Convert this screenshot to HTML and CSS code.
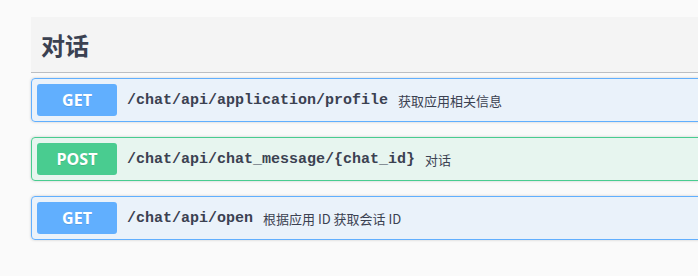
FILE: index.html
```html
<!DOCTYPE html>
<html lang="zh-CN">
<head>
  <meta charset="UTF-8">
  <title>对话</title>
  <link rel="stylesheet" href="styles.css">
</head>
<body>
  <div class="tag-section">
    <h3 class="opblock-tag">对话</h3>

    <div class="opblock opblock-get">
      <div class="opblock-summary">
        <span class="method">GET</span>
        <span class="path">/chat/api/application/profile</span>
        <span class="desc">获取应用相关信息</span>
      </div>
    </div>

    <div class="opblock opblock-post">
      <div class="opblock-summary">
        <span class="method">POST</span>
        <span class="path">/chat/api/chat_message/{chat_id}</span>
        <span class="desc">对话</span>
      </div>
    </div>

    <div class="opblock opblock-get">
      <div class="opblock-summary">
        <span class="method">GET</span>
        <span class="path">/chat/api/open</span>
        <span class="desc">根据应用 ID 获取会话 ID</span>
      </div>
    </div>
  </div>
</body>
</html>
```

FILE: styles.css
```css
body {
  margin: 0;
  padding: 17px 0 0 31px;
  background: #fafafa;
  font-family: 'Noto Sans', 'Noto Sans CJK SC', sans-serif;
  color: #3b4151;
  overflow: hidden;
}

.tag-section {
  width: 690px;
}

.opblock-tag {
  margin: 0 0 5px;
  padding: 10px 20px 10px 10px;
  height: 35px;
  line-height: 35px;
  background: #f4f4f4;
  border-bottom: 1px solid rgba(59, 65, 81, 0.3);
  font-family: 'Noto Sans CJK SC', sans-serif;
  font-size: 24px;
  font-weight: 700;
}

.opblock {
  margin: 0 0 15px;
  border: 1px solid #000;
  border-radius: 4px;
  box-shadow: 0 0 3px rgba(0, 0, 0, 0.19);
}

.opblock-summary {
  display: flex;
  align-items: center;
  padding: 5px;
}

.method {
  min-width: 80px;
  height: 32px;
  line-height: 32px;
  border-radius: 3px;
  text-align: center;
  color: #fff;
  font-family: 'Open Sans', sans-serif;
  font-size: 16px;
  font-weight: 700;
  text-shadow: 0 1px 0 rgba(0, 0, 0, 0.1);
}

.path {
  padding: 0 10px;
  font-family: 'Liberation Mono', monospace;
  font-size: 15px;
  font-weight: 700;
}

.desc {
  font-family: 'Noto Sans CJK SC', sans-serif;
  font-size: 13px;
}

.opblock-get {
  border-color: #61affe;
  background: rgba(97, 175, 254, 0.1);
}

.opblock-get .method {
  background: #61affe;
}

.opblock-post {
  border-color: #49cc90;
  background: rgba(73, 204, 144, 0.1);
}

.opblock-post .method {
  background: #49cc90;
}
```
